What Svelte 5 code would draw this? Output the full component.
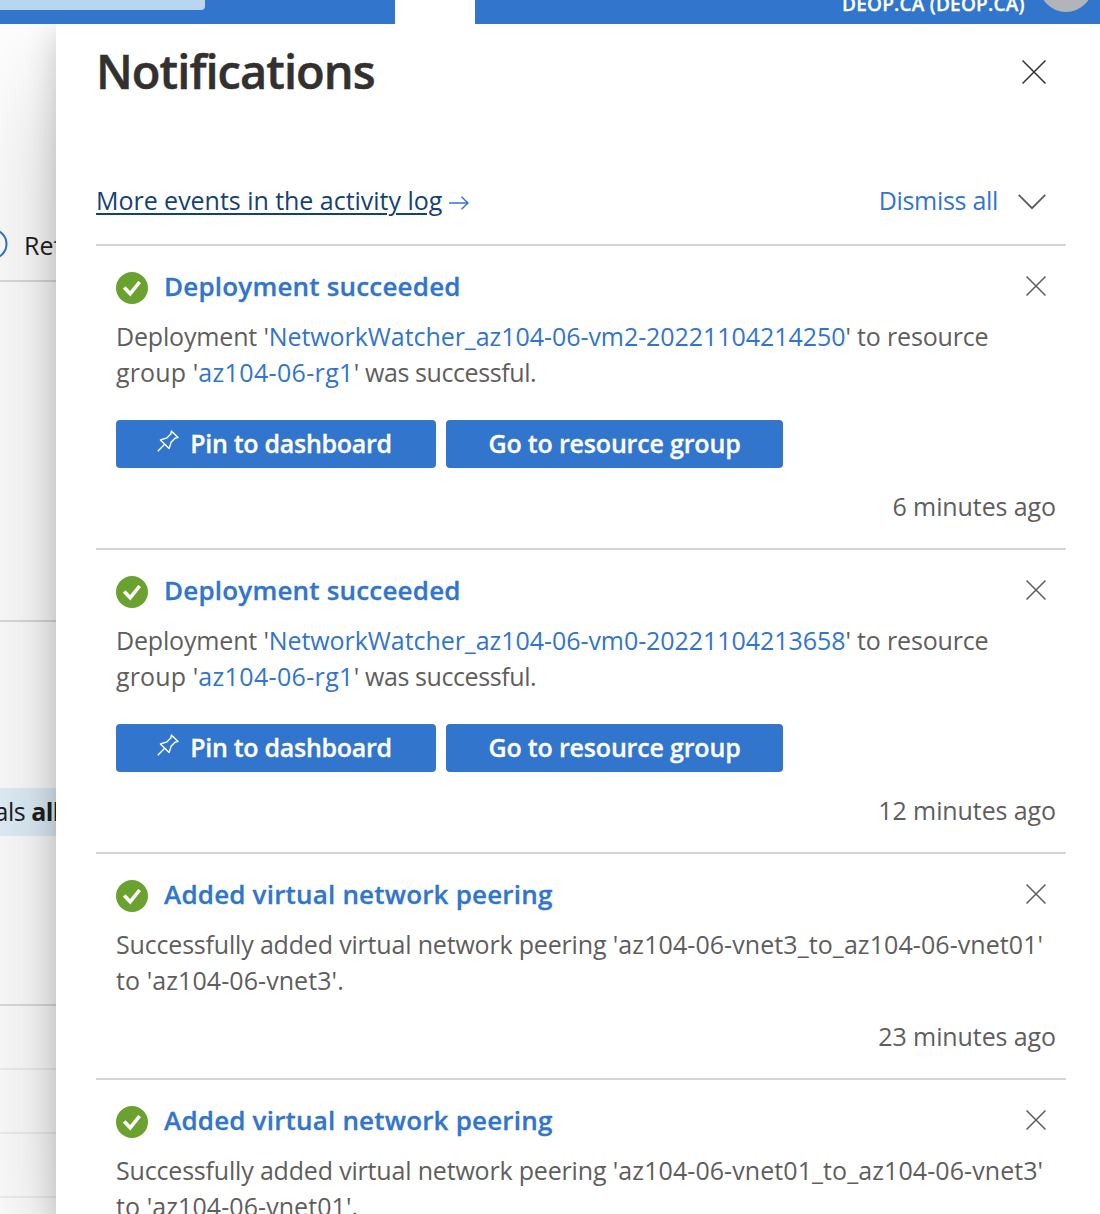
<script>
  const deployments = [
    { name: 'NetworkWatcher_az104-06-vm2-20221104214250', age: '6 minutes ago' },
    { name: 'NetworkWatcher_az104-06-vm0-20221104213658', age: '12 minutes ago' }
  ];
  const peerings = [
    { from: 'az104-06-vnet3_to_az104-06-vnet01', to: 'az104-06-vnet3', age: '23 minutes ago' },
    { from: 'az104-06-vnet01_to_az104-06-vnet3', to: 'az104-06-vnet01', age: '23 minutes ago' }
  ];
</script>

{#snippet heading(text)}
  <div class="heading">
    <svg class="status" viewBox="0 0 32 32" width="32" height="32">
      <circle cx="16" cy="16" r="16" fill="#6ba22f" />
      <path d="M8.2 15.6 L14.2 21.8 L23.6 10" fill="none" stroke="#fff" stroke-width="3.6" />
    </svg>
    <h2>{text}</h2>
    <svg class="dismiss" viewBox="0 0 20 20" width="20" height="20">
      <path d="M.5 .5 L19.5 19.5 M19.5 .5 L.5 19.5" fill="none" stroke="#5c5c5c" stroke-width="1.5" />
    </svg>
  </div>
{/snippet}

<div class="screen">
  <header class="topbar">
    <div class="search"></div>
    <div class="active"></div>
    <span class="tenant">DEOP.CA (DEOP.CA)</span>
    <div class="avatar"></div>
  </header>

  <div class="main">
    <div class="page">
      <div class="toolbar">
        <svg viewBox="0 0 32 32" width="32" height="32">
          <circle cx="16" cy="16" r="14.5" fill="none" stroke="#3275cd" stroke-width="2" />
        </svg>
        <span>Refresh</span>
      </div>
      <div class="blank"></div>
      <div class="filters">
        <div class="chip"><span>als <b>all</b></span></div>
      </div>
      <div class="line"></div>
      <div class="line"></div>
      <div class="line"></div>
      <div class="line"></div>
    </div>

    <section class="panel">
      <div class="title">
        <h1>Notifications</h1>
        <svg viewBox="0 0 24 24" width="24" height="24">
          <path d="M.5 .5 L23.5 23.5 M23.5 .5 L.5 23.5" fill="none" stroke="#323130" stroke-width="1.5" />
        </svg>
      </div>

      <div class="actions">
        <span class="more">More events in the activity log</span>
        <svg class="arrow" viewBox="0 0 20 14" width="20" height="14">
          <path d="M0 7 H19 M12.5 .7 L19 7 L12.5 13.3" fill="none" stroke="#3a6fe0" stroke-width="1.5" />
        </svg>
        <span class="clear">Dismiss all</span>
        <svg class="chevron" viewBox="0 0 28 16" width="28" height="16">
          <path d="M.7 .9 L14 14.2 L27.3 .9" fill="none" stroke="#5c5c5c" stroke-width="1.8" />
        </svg>
      </div>

      {#each deployments as item}
        <article>
          {@render heading('Deployment succeeded')}
          <p>
            <span class="name">Deployment '<span class="link">{item.name}</span>' to resource</span><br />
            <span class="group">group '<span class="link">az104-06-rg1</span><span class="rest">' was successful.</span></span>
          </p>
          <div class="buttons">
            <button class="pin">
              <svg viewBox="0 0 22 22" width="22" height="22">
                <path d="M.8 21.2 L7.2 14.8 M3.4 9.9 L12.1 18.6 L14.1 12.2 L18.3 8 L21 7.6 L14.4 1 L14 3.8 L9.8 8 Z" fill="none" stroke="#fff" stroke-width="1.4" stroke-linejoin="round" />
              </svg>
              <span>Pin to dashboard</span>
            </button>
            <button class="go"><span>Go to resource group</span></button>
          </div>
          <time>{item.age}</time>
        </article>
      {/each}

      {#each peerings as item}
        <article>
          {@render heading('Added virtual network peering')}
          <p>
            <span class="lead">Successfully added virtual network peering</span>
            <span class="target">'{item.from}'</span><br />
            <span class="target">to '{item.to}'.</span>
          </p>
          <time>{item.age}</time>
        </article>
      {/each}
    </section>
  </div>
</div>

<style>
  :global(body) {
    background: #fff;
    overflow: hidden;
  }
  .screen {
    width: 1100px;
    height: 1214px;
    overflow: hidden;
    display: flex;
    flex-direction: column;
    font-family: 'Segoe UI', 'Open Sans', 'Noto Sans', sans-serif;
    font-size: 25px;
    color: #5f5e5d;
    background: #fff;
  }
  svg {
    display: block;
    flex: none;
  }
  .topbar {
    height: 24px;
    flex: none;
    display: flex;
    align-items: flex-start;
    background: #3275cd;
    overflow: hidden;
    position: relative;
    z-index: 1;
  }
  .search {
    width: 205px;
    height: 10px;
    background: #b9d5f0;
    border-radius: 0 0 4px 0;
  }
  .active {
    width: 80px;
    height: 24px;
    margin-left: 190px;
    background: #fff;
  }
  .tenant {
    margin: -10px 0 0 367px;
    width: 200px;
    line-height: 28px;
    font-size: 19px;
    font-weight: 600;
    -webkit-text-stroke: 0.3px;
    color: #fff;
    white-space: nowrap;
    letter-spacing: 0.22px;
  }
  .avatar {
    width: 54px;
    height: 54px;
    flex: none;
    margin: -42px 0 0 -3px;
    border-radius: 50%;
    background: #b1b5ba;
  }
  .main {
    flex: 1;
    min-height: 0;
    display: flex;
  }
  .page {
    width: 56px;
    flex: none;
    overflow: hidden;
    color: #1f1f1f;
    white-space: nowrap;
  }
  .toolbar {
    height: 38px;
    margin-top: 202px;
    padding: 0 0 16px;
    display: flex;
    align-items: center;
    border-bottom: 2px solid #dcdcdc;
    line-height: 36px;
  }
  .toolbar svg {
    margin: -3px 16px 0 -24px;
  }
  .blank {
    height: 338px;
    border-bottom: 2px solid #dcdcdc;
  }
  .filters {
    height: 216px;
    padding-top: 166px;
    border-bottom: 2px solid #dedede;
  }
  .chip {
    height: 48px;
    line-height: 47px;
    width: 56px;
    background: #e2f1fb;
    display: flex;
    justify-content: flex-end;
  }
  .chip span {
    margin-right: -4px;
    letter-spacing: -0.5px;
  }
  .line {
    height: 62px;
    border-bottom: 2px solid #f0f0f0;
  }
  .panel {
    flex: 1;
    min-width: 0;
    padding: 0 34px 0 40px;
    background: #fff;
    box-shadow: 0 51px 115px rgba(0, 0, 0, 0.22), 0 10px 29px rgba(0, 0, 0, 0.18);
  }
  .title {
    height: 96px;
    padding-right: 20px;
    display: flex;
    align-items: center;
    justify-content: space-between;
  }
  h1 {
    margin: -3px 0 0;
    font-size: 47px;
    line-height: 60px;
    font-weight: 600;
    -webkit-text-stroke: 0.5px;
    color: #323130;
    letter-spacing: -0.95px;
  }
  .actions {
    height: 84px;
    margin-top: 40px;
    padding-right: 20px;
    display: flex;
    align-items: center;
    border-bottom: 2px solid #d5d5d5;
    line-height: 36px;
    white-space: nowrap;
  }
  .more {
    margin-top: -4px;
    color: #154274;
    text-decoration: underline;
    text-decoration-thickness: 2px;
    text-underline-offset: 3px;
    letter-spacing: -0.03px;
  }
  .arrow {
    margin: 2px 0 0 7px;
  }
  .clear {
    margin: -4px 0 0 auto;
    color: #3275cd;
    letter-spacing: -0.3px;
  }
  .chevron {
    margin-left: 20px;
  }
  article {
    padding: 26px 10px 22px 20px;
    border-bottom: 2px solid #d5d5d5;
  }
  .heading {
    height: 32px;
    display: flex;
    align-items: center;
    padding-right: 10px;
  }
  h2 {
    margin: -5px auto 0 16px;
    font-size: 26px;
    line-height: 32px;
    font-weight: 600;
    -webkit-text-stroke: 0.3px;
    color: #3275cd;
    white-space: nowrap;
    letter-spacing: 0.19px;
  }
  .dismiss {
    margin-top: -4px;
  }
  p {
    margin: 14px 0 0;
    line-height: 36px;
    white-space: nowrap;
  }
  .link {
    color: #3275cd;
  }
  .name {
    letter-spacing: -0.17px;
  }
  .name .link {
    letter-spacing: -0.06px;
  }
  .group {
    letter-spacing: 0.12px;
  }
  .group .link {
    letter-spacing: 0.35px;
  }
  .rest {
    letter-spacing: -0.4px;
  }
  .lead {
    letter-spacing: -0.18px;
  }
  .target {
    letter-spacing: 0.08px;
  }
  .buttons {
    display: flex;
    gap: 10px;
    margin-top: 28px;
    padding-top: 2px;
  }
  button {
    height: 48px;
    padding: 0 0 3px;
    border: 0;
    border-radius: 4px;
    background: #3275cd;
    color: #fff;
    font: 600 25px/36px 'Segoe UI', 'Open Sans', 'Noto Sans', sans-serif;
    -webkit-text-stroke: 0.3px;
    display: flex;
    align-items: center;
    justify-content: center;
    white-space: nowrap;
  }
  .pin {
    width: 320px;
    padding-right: 3px;
    gap: 11px;
    letter-spacing: -0.28px;
  }
  .pin svg {
    margin-top: -4px;
  }
  .go {
    width: 337px;
    letter-spacing: -0.17px;
  }
  time {
    display: block;
    margin: 20px 0 2px;
    line-height: 36px;
    text-align: right;
    letter-spacing: -0.1px;
  }
</style>
